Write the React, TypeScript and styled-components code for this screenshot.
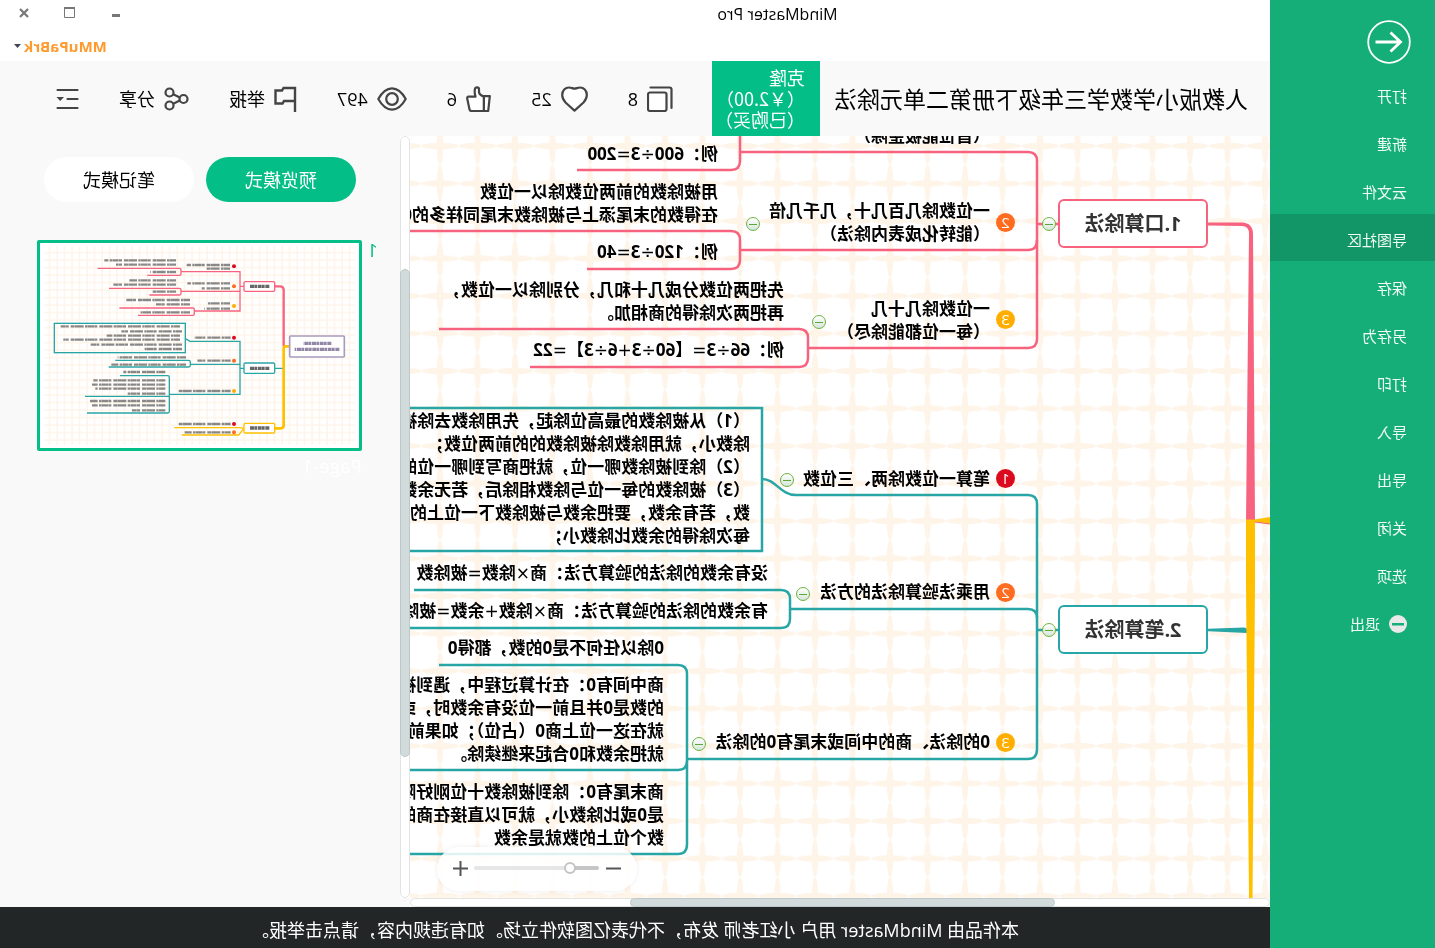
import React from 'react';
import styled, { createGlobalStyle } from 'styled-components';

const colors = {
  sidebar: '#15ae79',
  sidebarActive: '#129567',
  accent: '#03be86',
  panel: '#f9f9f9',
  pink: '#f7637f',
  teal: '#28a6a5',
  yellow: '#ffc000',
  red: '#dc0a1e',
  orange: '#ff6b1f',
  amber: '#ffae00',
  icon: '#444444',
  footer: '#222626',
};

const GlobalStyle = createGlobalStyle`
  *, *::before, *::after { box-sizing: border-box; }
  html, body { margin: 0; background: #ffffff; overflow-x: hidden; }
  body {
    font-family: "Open Sans", "Noto Sans CJK SC", sans-serif;
    color: #000000;
  }
  button { font: inherit; color: inherit; border: 0; padding: 0; background: none; cursor: pointer; }
  svg { display: block; flex: none; }
`;

/* The window is shown mirrored, left to right. */
const Window = styled.div`
  display: grid;
  grid-template-columns: 165px minmax(0, 1fr);
  min-height: 100vh;
  transform: scaleX(-1);
`;

/* ---------- sidebar ---------- */

const Sidebar = styled.nav`
  background: ${colors.sidebar};
  color: #f0faf6;
`;

const BackButton = styled.button`
  display: block;
  margin: 20px 0 6px 24px;
`;

const Menu = styled.ul`
  list-style: none;
  margin: 0;
  padding: 0;
`;

const MenuButton = styled.button<{ $active?: boolean }>`
  display: flex;
  align-items: center;
  gap: 9px;
  width: 100%;
  height: 47px;
  margin-bottom: 1px;
  padding: 4px 28px 0;
  font-size: 15px;
  line-height: 20px;
  background: ${(p) => (p.$active ? colors.sidebarActive : 'transparent')};
`;

/* ---------- window header ---------- */

const Main = styled.main`
  display: flex;
  flex-direction: column;
  min-width: 0;
`;

const TitleBar = styled.header`
  display: flex;
  height: 30px;
`;

const AppName = styled.div`
  flex: 1;
  text-align: center;
  font-size: 16px;
  line-height: 28px;
`;

const WindowControls = styled.div`
  display: flex;
  justify-content: flex-end;
  align-items: center;
  gap: 34px;
  width: 285px;
  padding: 0 18px 5px 0;
`;

const ControlButton = styled.button`
  display: grid;
  place-items: center;
  width: 12px;
  height: 12px;
`;

const AccountRow = styled.div`
  display: flex;
  justify-content: flex-end;
  height: 31px;
  padding-right: 14px;
`;

const AccountButton = styled.button`
  display: flex;
  align-items: center;
  gap: 3px;
  font-size: 15px;
  font-weight: 700;
  color: #ff9a2e;
`;

/* ---------- toolbar ---------- */

const Toolbar = styled.div`
  display: flex;
  align-items: center;
  height: 75px;
  padding-left: 22px;
  background: ${colors.panel};
`;

const DocumentTitle = styled.h1`
  flex: none;
  width: 428px;
  margin: 0;
  font-size: 23px;
  font-weight: 400;
  line-height: 32px;
  white-space: nowrap;
`;

const CloneButton = styled.button`
  flex: none;
  align-self: stretch;
  width: 108px;
  padding: 0 0 0 15px;
  text-align: left;
  font-family: "Noto Sans CJK SC", sans-serif;
  font-size: 18px;
  line-height: 21px;
  white-space: nowrap;
  color: #ffffff;
  background: ${colors.accent};
`;

const Actions = styled.div`
  display: flex;
  align-items: center;
  gap: 40px;
  margin-left: 39px;
`;

const ActionButton = styled.button`
  display: flex;
  align-items: center;
  gap: 9px;
  font-size: 18px;
  line-height: 24px;
  white-space: nowrap;
`;

/* ---------- work area ---------- */

const Workspace = styled.div`
  flex: 1;
  display: grid;
  grid-template-columns: minmax(0, 1fr) 10px 400px;
  grid-template-rows: minmax(0, 1fr) 9px;
  min-height: 771px;
`;

const Canvas = styled.section`
  position: relative;
  overflow: hidden;
`;

const CanvasDrawing = styled.svg`
  position: absolute;
  inset: 0;
  width: 100%;
  height: 100%;
`;

const ScrollTrack = styled.div<{ $vertical?: boolean }>`
  display: flex;
  flex-direction: ${(p) => (p.$vertical ? 'column' : 'row')};
  border: 1px solid #e2e4e4;
  border-radius: 5px;
  background: #ffffff;
`;

const ScrollSpace = styled.div<{ $grow: number }>`
  flex: ${(p) => p.$grow} 1 0;
`;

const ScrollThumb = styled.div<{ $grow: number }>`
  flex: ${(p) => p.$grow} 1 0;
  margin: -1px;
  border: 1px solid #bfc8c9;
  border-radius: 5px;
  background: #d2dbdc;
`;

const NodeBox = styled.div<{ $x: number; $y: number; $color: string }>`
  position: absolute;
  left: ${(p) => p.$x}px;
  top: ${(p) => p.$y}px;
  width: 150px;
  height: 49px;
  border: 2px solid ${(p) => p.$color};
  border-radius: 6px;
  background: #ffffff;
  text-align: center;
  font-size: 20px;
  font-weight: 700;
  line-height: 45px;
  color: #333333;
`;

const TopicText = styled.div<{ $x: number; $y: number }>`
  position: absolute;
  left: ${(p) => p.$x}px;
  top: ${(p) => p.$y}px;
  font-size: 17px;
  font-weight: 700;
  line-height: 23px;
  white-space: pre;
`;

const Operator = styled.span`
  font-family: "DejaVu Sans", sans-serif;
  font-weight: 400;
  line-height: 1;
`;

const Badge = styled.div<{ $x: number; $y: number; $color: string }>`
  position: absolute;
  left: ${(p) => p.$x - 10}px;
  top: ${(p) => p.$y - 10}px;
  width: 19px;
  height: 19px;
  border-radius: 50%;
  background: ${(p) => p.$color};
  color: #ffffff;
  text-align: center;
  font-size: 15px;
  font-weight: 400;
  line-height: 19px;
`;

const Toggle = styled.button<{ $x: number; $y: number }>`
  position: absolute;
  left: ${(p) => p.$x - 7}px;
  top: ${(p) => p.$y - 7}px;
  width: 14px;
  height: 14px;
  border: 1px solid #6db33f;
  border-radius: 50%;
  background: linear-gradient(#ffffff, #d5e6dc);
  display: grid;
  place-items: center;

  &::before {
    content: '';
    width: 8px;
    height: 1px;
    background: #5fa838;
  }
`;

const ZoomBar = styled.div`
  position: absolute;
  right: 27px;
  bottom: 7px;
  display: flex;
  align-items: center;
  justify-content: space-between;
  width: 200px;
  height: 44px;
  padding: 0 16px 2px;
  border-radius: 22px;
  background: rgba(255, 255, 255, 0.85);
  box-shadow: 0 0 5px rgba(0, 0, 0, 0.08);
`;

const ZoomSlider = styled.input`
  appearance: none;
  width: 125px;
  height: 12px;
  margin: 0;
  background: transparent;

  &::-webkit-slider-runnable-track {
    height: 4px;
    border-radius: 2px;
    background: linear-gradient(to right, #c6c6c6 24%, #e6e6e6 24%);
  }
  &::-webkit-slider-thumb {
    appearance: none;
    width: 12px;
    height: 12px;
    margin-top: -4px;
    border: 2px solid #c4c4c4;
    border-radius: 50%;
    background: #ffffff;
  }
`;

/* ---------- page panel ---------- */

const PagePanel = styled.aside`
  grid-row: 1 / 3;
  grid-column: 3;
  padding-top: 21px;
  background: ${colors.panel};
`;

const Corner = styled.div`
  grid-column: 2;
  background: ${colors.panel};
`;

const Tabs = styled.div`
  display: flex;
  justify-content: center;
  gap: 12px;
`;

const TabButton = styled.button<{ $active?: boolean }>`
  width: 150px;
  height: 45px;
  border-radius: 23px;
  font-size: 18px;
  line-height: 24px;
  color: ${(p) => (p.$active ? '#ffffff' : '#000000')};
  background: ${(p) => (p.$active ? colors.accent : '#ffffff')};
`;

const PageItem = styled.div`
  display: grid;
  grid-template-columns: 16px 325px;
  align-items: start;
  margin: 38px 0 0 22px;
`;

const PageNumber = styled.div`
  font-size: 19px;
  line-height: 20px;
  color: ${colors.accent};
`;

const Thumbnail = styled.button`
  display: block;
  height: 211px;
  border: 3px solid ${colors.accent};
  border-radius: 2px;
  background: #ffffff;
  overflow: hidden;
`;

const PageName = styled.div`
  grid-column: 2;
  margin-top: 2px;
  font-size: 19px;
  line-height: 26px;
  color: #ffffff;
`;

const Footer = styled.footer`
  height: 41px;
  background: ${colors.footer};
  color: #ffffff;
  text-align: center;
  font-size: 18px;
  line-height: 46px;
  white-space: nowrap;
  overflow: hidden;
`;

/* ---------- icons ---------- */

const CopyIcon = () => (
  <svg width="26" height="26" fill="none" stroke={colors.icon} strokeWidth="2.2" strokeLinecap="round" strokeLinejoin="round">
    <rect x="6.5" y="6.5" width="18.500" height="18.500" rx="2" fill="#ffffff" />
    <path d="M22.5 1.5H3.5Q1.5 1.5 1.5 3.5V22" />
  </svg>
);

const HeartIcon = () => (
  <svg width="27" height="26" fill="#ffffff" stroke={colors.icon} strokeWidth="2.2" strokeLinejoin="round">
    <path d="M13.500 24.600L4.500 16.500C2.200 14 1.200 12 1.200 9C1.200 4.500 4.300 1.500 8 1.500C10.500 1.500 11.500 2.600 13.500 2.600S16.500 1.500 19 1.500C22.700 1.500 25.800 4.500 25.800 9C25.800 12 24.800 14 22.500 16.500Z" />
  </svg>
);

const ThumbIcon = () => (
  <svg width="25" height="26" fill="#ffffff" stroke={colors.icon} strokeWidth="2.200" strokeLinejoin="round">
    <path d="M1.200 10.200H7.200V25H2.800Z" />
    <path d="M7.200 25V10.500Q11.500 9 12 6.500V3.500C12 .6 15.800 .6 16.200 3.500C16.600 6.500 16.200 8.500 15.500 10.700H22.500Q24 10.700 23.800 12.500L21.500 23.500Q21.200 25 19.500 25Z" />
  </svg>
);

const EyeIcon = () => (
  <svg width="30" height="24" fill="none" stroke={colors.icon} strokeWidth="2.200">
    <path d="M1.300 12C5.500 4.500 10 1.400 15 1.400S24.500 4.500 28.700 12C24.500 19.500 20 22.600 15 22.600S5.500 19.500 1.300 12Z" strokeLinejoin="round" />
    <circle cx="15" cy="12" r="5.800" />
  </svg>
);

const FlagIcon = () => (
  <svg width="23" height="26" fill="none" stroke={colors.icon} strokeWidth="2.400">
    <path d="M2 26V2H13.500L15 4.500H21.500V17.500H14.500L13 15H2" />
  </svg>
);

const ShareIcon = () => (
  <svg width="25" height="24" fill="none" stroke={colors.icon} strokeWidth="2.200">
    <circle cx="5.500" cy="12" r="4" />
    <circle cx="19.500" cy="5.500" r="4" />
    <circle cx="19.500" cy="18.500" r="4" />
    <path d="M9.200 10.400L15.800 7.200M9.200 13.600L15.800 16.800" />
  </svg>
);

const OutlineIcon = () => (
  <svg width="23" height="22" fill="none" stroke={colors.icon} strokeWidth="2.200" strokeLinecap="round">
    <path d="M1.500 2H21.500M1.500 11H11.500M1.500 20H21.500" />
    <path d="M15 9H22.500L18.800 13Z" fill={colors.icon} stroke="none" />
  </svg>
);

/* ---------- mind map data ---------- */

interface Topic {
  x: number;
  y: number;
  lines: string[];
}

const topics: Topic[] = [
  { x: 280, y: -12, lines: ['（首位能被整除）'] },
  { x: 552, y: 6, lines: ['例：600÷3=200'] },
  { x: 280, y: 63, lines: ['一位数除几百几十，几千几倍', '（能转化成表内除法）'] },
  { x: 552, y: 44, lines: ['用被除数的前两位数除以一位数', '在得数的末尾添上与被除数末尾同样多的0'] },
  { x: 552, y: 104, lines: ['例：120÷3=40'] },
  { x: 280, y: 161, lines: ['一位数除几十几', '（每一位都能除尽）'] },
  { x: 486, y: 142, lines: ['先把两位数分成几十和几，分别除以一位数，', '再把两次除得的商相加。'] },
  { x: 486, y: 202, lines: ['例：66÷3=【60÷3+6÷3】=22'] },
  { x: 280, y: 331, lines: ['笔算一位数除两、三位数'] },
  {
    x: 520,
    y: 273,
    lines: [
      '（1）从被除数的最高位除起，先用除数去除被',
      '除数小，就用除数除被除数的的前两位数；',
      '（2）除到被除数哪一位，就把商写到哪一位的',
      '（3）被除数的每一位与除数相除后，若无余数',
      '数，若有余数，要把余数与被除数下一位上的数',
      '每次除得的余数比除数小；',
    ],
  },
  { x: 280, y: 444, lines: ['用乘法验算除法的方法'] },
  { x: 502, y: 425, lines: ['没有余数的除法的验算方法：商×除数=被除数'] },
  { x: 502, y: 463, lines: ['有余数的除法的验算方法：商×除数+余数=被除数'] },
  { x: 280, y: 594, lines: ['0的除法、商的中间或末尾有0的除法'] },
  { x: 606, y: 500, lines: ['0除以任何不是0的数，都得0'] },
  {
    x: 606,
    y: 537,
    lines: [
      '商中间有0：在计算过程中，遇到被',
      '的数是0并且前一位没有余数时，或',
      '就在这一位上商0（占位）；如果前',
      '就把余数和0合起来继续除。',
    ],
  },
  {
    x: 606,
    y: 644,
    lines: ['商末尾有0：除到被除数十位刚好除', '是0或比除数小，就可以直接在商的', '数个位上的数就是余数'],
  },
];

const badges = [
  { x: 265, y: 87, n: '2', color: colors.orange },
  { x: 265, y: 184, n: '3', color: colors.amber },
  { x: 265, y: 343, n: '1', color: colors.red },
  { x: 265, y: 457, n: '2', color: colors.orange },
  { x: 265, y: 607, n: '3', color: colors.amber },
];

const toggles = [
  [221, 88],
  [517, 88],
  [451, 186],
  [483, 344],
  [467, 458],
  [571, 608],
  [221, 494],
];

const pinkLinks = [
  'M212 88H233',
  'M530 16H242Q233 16 233 25V203Q233 212 242 212H462',
  'M233 104Q233 114 242 114H530',
  'M530 0V25Q530 34 539 34H693',
  'M860 95H539Q530 95 530 104V124Q530 133 539 133H683',
  'M831 193H471Q462 193 462 202V222Q462 231 471 231H740',
];

const tealLinks = [
  'M212 494H233',
  'M508 343C494 343 490 359 474 359H242Q233 359 233 368V613Q233 623 242 623H583',
  'M233 482Q233 473 242 473H480',
  'M870 272H508V415H870',
  'M856 454H489Q480 454 480 463V483Q480 492 489 492H870',
  'M831 529H592Q583 529 583 538V708Q583 718 592 718H870',
  'M583 625Q583 634 592 634H870',
];

const withOperators = (line: string) =>
  line.split(/([÷×=+])/).map((part, i) => (i % 2 ? <Operator key={i}>{part}</Operator> : part));

const MindMapDrawing = () => (
  <CanvasDrawing aria-hidden="true">
    <defs>
      <pattern id="grid" x="-13.750" y="-8.750" width="37.500" height="37.500" patternUnits="userSpaceOnUse">
        <rect width="37.500" height="37.500" fill="#ffffff" />
        <g fill="#fef4e8">
          <ellipse cx="18.750" cy="18.750" rx="18.500" ry="3.200" />
          <ellipse cx="18.750" cy="18.750" rx="3.200" ry="18.500" />
        </g>
      </pattern>
    </defs>
    <rect width="100%" height="100%" fill="url(#grid)" />
    <path d="M0 386.500L15 385V386.500L0 388.500Z" fill={colors.pink} />
    <path d="M62 86.500H28Q17 87 17 98L15 384H24L21 98Q21 90 28 90L62 89.500Z" fill={colors.pink} />
    <path d="M62 492.800L26 491.500Q23 491.500 23 494V497L62 495.200Z" fill={colors.teal} />
    <path d="M0 381L15 383.500H24V450L21 762H17.500L15 450V385.500L0 387.500Z" fill={colors.yellow} />
    <g fill="none" strokeWidth="2.500">
      {pinkLinks.map((d) => (
        <path key={d} d={d} stroke={colors.pink} />
      ))}
      {tealLinks.map((d) => (
        <path key={d} d={d} stroke={colors.teal} />
      ))}
    </g>
  </CanvasDrawing>
);

/* Rows of unreadable text in the page preview: x, y, width. */
const previewText = [
  [396, 75, 130], [396, 86, 70], [558, 61, 215], [558, 74, 180], [558, 96, 78],
  [396, 130, 128], [396, 145, 86], [558, 121, 140], [558, 134, 188], [558, 155, 72],
  [396, 190, 66], [396, 206, 78], [516, 180, 192], [516, 193, 102], [516, 217, 148],
  [394, 293, 108], [546, 259, 358], [540, 274, 182], [546, 287, 220], [546, 299, 350],
  [540, 314, 274], [540, 327, 112], [394, 362, 100], [528, 352, 205], [528, 374, 224],
  [394, 453, 160], [590, 396, 126], [590, 421, 216], [590, 434, 220], [590, 446, 210],
  [590, 461, 116], [590, 483, 226], [590, 496, 220], [590, 511, 100], [394, 552, 158],
  [394, 577, 138],
];

const previewBadges = [
  [384, 79, colors.red], [384, 139, colors.orange], [384, 198, colors.amber],
  [384, 293, colors.red], [384, 362, colors.orange], [384, 453, colors.amber],
  [384, 552, colors.red], [384, 577, colors.orange],
] as const;

const PagePreview = () => (
  <svg width="319" height="205" viewBox="9 9 957 615" aria-hidden="true">
    <defs>
      <pattern id="previewGrid" x="4" y="4" width="22.500" height="22.500" patternUnits="userSpaceOnUse">
        <path d="M11 0V22.500M0 11H22.500" stroke="#fef0e0" strokeWidth="3" />
      </pattern>
    </defs>
    <rect x="20" y="18" width="934" height="596" fill="url(#previewGrid)" />
    <g fill="none" strokeWidth="4">
      <g stroke={colors.pink}>
        <path d="M235 319V150Q235 139 246 139H262" strokeWidth="7" />
        <path d="M354 139H366M543 95H366V213H503M366 154H543" />
        <path d="M793 85H548Q543 85 543 90V101Q543 106 548 106H644" />
        <path d="M759 145H548Q543 145 543 150V160Q543 165 548 165H638" />
        <path d="M728 204H508Q503 204 503 209V221Q503 226 508 226H672" />
        <rect x="262" y="125" width="92" height="29" rx="4" fill="#ffffff" />
      </g>
      <g stroke={colors.teal}>
        <path d="M235 385H262M354 385H366M530 296L516 304H366V463H578M366 373H515" />
        <rect x="530" y="250" width="393" height="88" />
        <path d="M740 361H520Q515 361 515 366V376Q515 381 520 381H760" />
        <path d="M726 407H583Q578 407 578 412V514Q578 519 583 519H825M578 469H831" />
        <rect x="262" y="369" width="92" height="31" rx="4" fill="#ffffff" />
      </g>
      <g stroke={colors.yellow}>
        <path d="M217 319H229Q235 319 235 326V556Q235 565 244 565H262" strokeWidth="8" />
        <path d="M354 565L366 563H563M354 565L370 585H541" />
        <rect x="262" y="550" width="92" height="29" rx="4" fill="#ffffff" />
      </g>
      <rect x="53" y="288" width="164" height="63" rx="3" fill="#ffffff" stroke="#a99abf" strokeWidth="5" />
      <g stroke="#3c3c3c" strokeWidth="7" strokeDasharray="19 1 7 4 26 1 12 6 9 1" opacity=".6">
        {previewText.map(([x, y, w]) => (
          <path key={`${x}-${y}`} d={`M${x} ${y}h${w}`} />
        ))}
      </g>
      <g stroke="#333333" strokeWidth="10" strokeDasharray="12 2 8 1" opacity=".75">
        <path d="M278 139h60M278 385h60M278 564h60" />
        <path d="M92 310h84M68 328h134" stroke="#6f608c" />
      </g>
    </g>
    {previewBadges.map(([x, y, color]) => (
      <circle key={y} cx={x} cy={y} r="6" fill={color} />
    ))}
  </svg>
);

/* ---------- page ---------- */

const menuItems = ['打开', '新建', '云文件', '导图社区', '保存', '另存为', '打印', '导入', '导出', '关闭', '选项'];

const actions = [
  { name: '克隆数', icon: <CopyIcon />, text: '8' },
  { name: '喜欢', icon: <HeartIcon />, text: '25' },
  { name: '点赞', icon: <ThumbIcon />, text: '6' },
  { name: '浏览', icon: <EyeIcon />, text: '497' },
  { name: '举报', icon: <FlagIcon />, text: '举报' },
  { name: '分享', icon: <ShareIcon />, text: '分享' },
  { name: '大纲', icon: <OutlineIcon />, text: '' },
];

export default function App() {
  return (
    <>
      <GlobalStyle />
      <Window>
        <Sidebar>
          <BackButton aria-label="返回">
            <svg width="44" height="44" fill="none" stroke="#ffffff">
              <circle cx="22" cy="22" r="20.800" strokeWidth="1.800" />
              <path d="M35.500 22H10.500M20.500 12.500L10.500 22L20.500 31.500" strokeWidth="2.800" />
            </svg>
          </BackButton>
          <Menu>
            {menuItems.map((item) => (
              <li key={item}>
                <MenuButton $active={item === '导图社区'}>{item}</MenuButton>
              </li>
            ))}
            <li>
              <MenuButton>
                <svg width="18" height="18">
                  <circle cx="9" cy="9" r="9" fill="#e9e9e9" />
                  <rect x="3" y="8" width="12" height="2.500" fill={colors.sidebar} />
                </svg>
                退出
              </MenuButton>
            </li>
          </Menu>
        </Sidebar>

        <Main>
          <TitleBar>
            <AppName>MindMaster Pro</AppName>
            <WindowControls>
              <ControlButton aria-label="最小化">
                <svg width="8" height="8">
                  <rect y="5" width="8" height="3" fill="#777777" />
                </svg>
              </ControlButton>
              <ControlButton aria-label="最大化">
                <svg width="11" height="11" fill="none" stroke="#777777">
                  <path d="M.5 1V10.500H10.500V1" />
                  <path d="M0 1H11" strokeWidth="2" />
                </svg>
              </ControlButton>
              <ControlButton aria-label="关闭窗口">
                <svg width="10" height="10" stroke="#777777" strokeWidth="2.200">
                  <path d="M1 1L9 9M9 1L1 9" />
                </svg>
              </ControlButton>
            </WindowControls>
          </TitleBar>
          <AccountRow>
            <AccountButton>
              MMuPaBrk
              <svg width="7" height="4">
                <path d="M0 0H7L3.500 4Z" fill="#44445a" />
              </svg>
            </AccountButton>
          </AccountRow>

          <Toolbar>
            <DocumentTitle>人教版小学数学三年级下册第二单元除法</DocumentTitle>
            <CloneButton>
              克隆
              <br />
              （￥2.00）
              <br />
              （已购买）
            </CloneButton>
            <Actions>
              {actions.map((action) => (
                <ActionButton key={action.name} aria-label={action.name}>
                  {action.icon}
                  {action.text}
                </ActionButton>
              ))}
            </Actions>
          </Toolbar>

          <Workspace>
            <Canvas>
              <MindMapDrawing />
              <NodeBox $x={62} $y={63} $color={colors.pink}>1.口算除法</NodeBox>
              <NodeBox $x={62} $y={469} $color={colors.teal}>2.笔算除法</NodeBox>
              {topics.map((topic) => (
                <TopicText key={`${topic.x}-${topic.y}`} $x={topic.x} $y={topic.y}>
                  {topic.lines.map((line) => (
                    <div key={line}>{withOperators(line)}</div>
                  ))}
                </TopicText>
              ))}
              {badges.map((badge) => (
                <Badge key={badge.y} $x={badge.x} $y={badge.y} $color={badge.color}>
                  {badge.n}
                </Badge>
              ))}
              {toggles.map(([x, y]) => (
                <Toggle key={`${x}-${y}`} $x={x} $y={y} aria-label="收起" />
              ))}
              <ZoomBar>
                <button aria-label="缩小">
                  <svg width="15" height="15" stroke="#555555" strokeWidth="2">
                    <path d="M0 7.500H15" />
                  </svg>
                </button>
                <ZoomSlider type="range" aria-label="缩放" min="0" max="100" defaultValue="21" />
                <button aria-label="放大">
                  <svg width="15" height="15" stroke="#555555" strokeWidth="2">
                    <path d="M0 7.500H15M7.500 0V15" />
                  </svg>
                </button>
              </ZoomBar>
            </Canvas>
            <ScrollTrack $vertical>
              <ScrollSpace $grow={133} />
              <ScrollThumb $grow={488} />
              <ScrollSpace $grow={141} />
            </ScrollTrack>
            <PagePanel>
              <Tabs>
                <TabButton $active>预览模式</TabButton>
                <TabButton>笔记模式</TabButton>
              </Tabs>
              <PageItem>
                <PageNumber>1</PageNumber>
                <Thumbnail aria-label="第 1 页">
                  <PagePreview />
                </Thumbnail>
                <PageName>Page-1</PageName>
              </PageItem>
            </PagePanel>
            <ScrollTrack>
              <ScrollSpace $grow={215} />
              <ScrollThumb $grow={424} />
              <ScrollSpace $grow={221} />
            </ScrollTrack>
            <Corner />
          </Workspace>

          <Footer>本作品由 MindMaster 用户 小红老师 发布，不代表亿图软件立场。如有违规内容，请点击举报。</Footer>
        </Main>
      </Window>
    </>
  );
}
